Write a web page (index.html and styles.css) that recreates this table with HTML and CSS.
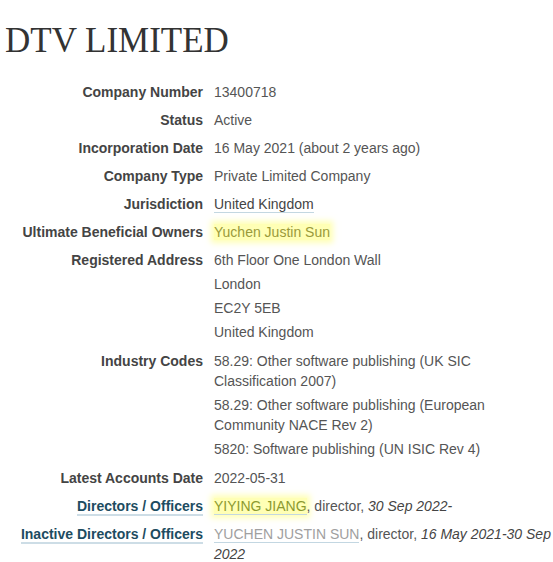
FILE: index.html
```html
<!DOCTYPE html>
<html lang="en">
<head>
  <meta charset="UTF-8">
  <title>DTV LIMITED</title>
  <link rel="stylesheet" href="styles.css">
</head>
<body>
  <h1 class="company-name">DTV LIMITED</h1>

  <dl class="attributes">
    <dt>Company Number</dt>
    <dd>13400718</dd>

    <dt>Status</dt>
    <dd>Active</dd>

    <dt>Incorporation Date</dt>
    <dd>16 May 2021 (about 2 years ago)</dd>

    <dt>Company Type</dt>
    <dd>Private Limited Company</dd>

    <dt>Jurisdiction</dt>
    <dd><a href="#" class="link">United Kingdom</a></dd>

    <dt>Ultimate Beneficial Owners</dt>
    <dd><span class="highlight owner">Yuchen Justin Sun</span></dd>

    <dt>Registered Address</dt>
    <dd>
      <ul class="lines">
        <li>6th Floor One London Wall</li>
        <li>London</li>
        <li>EC2Y 5EB</li>
        <li>United Kingdom</li>
      </ul>
    </dd>

    <dt>Industry Codes</dt>
    <dd>
      <ul class="lines">
        <li>58.29: Other software publishing (UK SIC Classification 2007)</li>
        <li>58.29: Other software publishing (European Community NACE Rev 2)</li>
        <li>5820: Software publishing (UN ISIC Rev 4)</li>
      </ul>
    </dd>

    <dt>Latest Accounts Date</dt>
    <dd>2022-05-31</dd>

    <dt><a href="#" class="label-link">Directors / Officers</a></dt>
    <dd><a href="#" class="link highlight officer">YIYING JIANG</a>, director, <em>30 Sep 2022-</em></dd>

    <dt><a href="#" class="label-link">Inactive Directors / Officers</a></dt>
    <dd><a href="#" class="link inactive">YUCHEN JUSTIN SUN</a>, director, <em>16 May 2021-30 Sep 2022</em></dd>
  </dl>
</body>
</html>
```

FILE: styles.css
```css
/* Company page */
body {
  margin: 0;
  padding: 0 0 0 5px;
  font-family: "Liberation Sans", Arial, sans-serif;
  font-size: 14px;
  color: #555;
  background: #fff;
}
.company-name {
  font-family: "Liberation Serif", "Times New Roman", serif;
  font-weight: normal;
  font-size: 35px;
  line-height: 40px;
  color: #333;
  margin: 21px 0;
}
/* Attribute list */
.attributes {
  display: grid;
  grid-template-columns: 198px 1fr;
  column-gap: 11px;
  row-gap: 8px;
  margin: 0;
  line-height: 20px;
}
.attributes dt {
  font-weight: bold;
  color: #444;
  text-align: right;
}
.attributes dd {
  margin: 0;
}
.lines {
  list-style: none;
  margin: 0;
  padding: 0 0 1px;
  display: flex;
  flex-direction: column;
  gap: 4px;
}
.attributes em {
  color: #444;
}
.link {
  color: #444;
  text-decoration: none;
  border-bottom: 1px solid #c3d7e2;
}
.label-link {
  color: #1d4c61;
  text-decoration: none;
  border-bottom: 2px solid #cddde6;
}
.link.inactive {
  color: #a0a0a0;
}
.highlight {
  background: rgba(255, 255, 120, 0.55);
  box-shadow: 0 0 6px 3px rgba(255, 255, 120, 0.55);
}
.owner {
  color: #9a9a3a;
}
.officer {
  color: #8c9a30;
}
```
